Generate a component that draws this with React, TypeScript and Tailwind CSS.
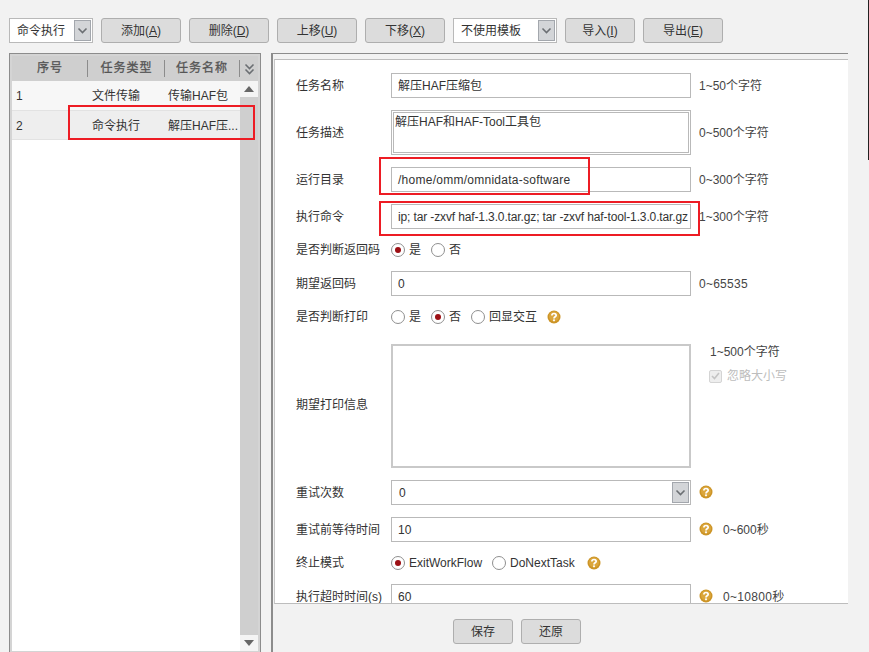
import React from "react";

const FONT = "font-['Liberation_Sans','Noto_Sans_CJK_SC',sans-serif]";

const Chevron = () => (
  <svg width="11" height="7" viewBox="0 0 11 7" fill="none">
    <path d="M1.5 1.5 L5.5 5.5 L9.5 1.5" stroke="#6b6f73" strokeWidth="1.6" />
  </svg>
);

const ArrowBtn = ({ className }: { className: string }) => (
  <span className={`flex items-center justify-center border border-[#a3a7ad] bg-[#d3d5d8] ${className}`}>
    <Chevron />
  </span>
);

const Btn = ({ label, hot, w = "w-[80px]" }: { label: string; hot?: string; w?: string }) => (
  <button className={`${w} h-[25px] rounded-[3px] border border-[#aeaeae] bg-[#dcdcdc] text-[12px] text-[#333]`}>
    {label}
    {hot && (
      <>
        (<u>{hot}</u>)
      </>
    )}
  </button>
);

const Help = () => (
  <svg width="14" height="14" viewBox="0 0 14 14" className="block shrink-0">
    <circle cx="7" cy="7" r="6.5" fill="#cc9426" />
    <circle cx="7" cy="6.5" r="5" fill="#dba63c" />
    <path d="M4.9 5.4 C4.9 2.9 9.2 2.9 9.2 5.3 C9.2 6.8 7 6.8 7 8.4" stroke="#fff" strokeWidth="1.7" fill="none" />
    <rect x="6.1" y="9.4" width="1.8" height="1.8" fill="#fff" />
  </svg>
);

const Radio = ({ on, label, gap = "w-[40px]" }: { on?: boolean; label: string; gap?: string }) => (
  <span className={`flex items-center gap-[4px] ${gap}`}>
    <span className="flex h-[14px] w-[14px] shrink-0 items-center justify-center rounded-full border border-[#8f8f8f] bg-white">
      {on && <span className="h-[6px] w-[6px] rounded-full bg-[#9c0f14]" />}
    </span>
    <span className="whitespace-nowrap">{label}</span>
  </span>
);

const Row = ({ label, children, h = "h-[25px]" }: { label: string; children: React.ReactNode; h?: string }) => (
  <div className={`flex shrink-0 items-center ${h}`}>
    <span className="w-[95px] shrink-0 whitespace-nowrap">{label}</span>
    {children}
  </div>
);

const Input = ({ value, className = "" }: { value: string; className?: string }) => (
  <div className={`flex h-[25px] w-[300px] shrink-0 items-center overflow-hidden whitespace-nowrap border border-[#b9b9b9] bg-white pl-[6px] text-[#333] ${className}`}>
    {value}
  </div>
);

const Hint = ({ children, className = "ml-[8px]" }: { children: React.ReactNode; className?: string }) => (
  <span className={`whitespace-nowrap text-[#444] ${className}`}>{children}</span>
);

const RedBox = ({ className }: { className: string }) => (
  <div className={`absolute border-2 border-[#ed1c24] ${className}`} />
);

export default function App() {
  return (
    <div className={`relative h-[652px] w-[869px] overflow-hidden bg-[#f2f2f2] pt-[18px] text-[12px] text-[#333] ${FONT}`}>
      {/* toolbar */}
      <div className="ml-[9px] flex h-[25px] items-center">
        <div className="flex h-[25px] w-[84px] items-center justify-between border border-[#b9b9b9] bg-white pl-[7px] pr-[1px]">
          <span>命令执行</span>
          <ArrowBtn className="h-[21px] w-[17px]" />
        </div>
        <div className="ml-[8px] flex gap-[8px]">
          <Btn label="添加" hot="A" />
          <Btn label="删除" hot="D" />
          <Btn label="上移" hot="U" />
          <Btn label="下移" hot="X" />
        </div>
        <div className="ml-[8px] flex h-[25px] w-[104px] items-center justify-between border border-[#b9b9b9] bg-white pl-[7px] pr-[1px]">
          <span>不使用模板</span>
          <ArrowBtn className="h-[21px] w-[17px]" />
        </div>
        <div className="ml-[8px] flex gap-[8px]">
          <Btn label="导入" hot="I" w="w-[70px]" />
          <Btn label="导出" hot="E" />
        </div>
      </div>

      <div className="ml-[9px] mt-[10px] flex h-[599px]">
        {/* task list */}
        <div className="h-[610px] w-[252px] shrink-0 border border-[#8c8c8c] bg-[#d4d4d4] p-[2px]">
          <div className="flex h-[25px] items-center bg-[#cfcfcf] tracking-[1px] text-[#555] [-webkit-text-stroke:0.3px_#555]">
            <span className="w-[76px] border-r border-[#8c8c8c] pl-[1px] text-center leading-[17px]">序号</span>
            <span className="w-[77px] border-r border-[#8c8c8c] pl-[1px] text-center leading-[17px]">任务类型</span>
            <span className="w-[75px] border-r border-[#8c8c8c] text-center leading-[17px]">任务名称</span>
            <span className="flex flex-1 flex-col items-center">
              <Chevron />
              <span className="-mt-[2px]">
                <Chevron />
              </span>
            </span>
          </div>
          <div className="flex h-[570px]">
            <div className="w-[228px] bg-white">
              <div className="flex h-[30px] items-center border-b border-[#e2e2e2] bg-[#f7f7f7] pt-[1px]">
                <span className="w-[80px] pl-[4px]">1</span>
                <span className="w-[76px]">文件传输</span>
                <span>传输HAF包</span>
              </div>
              <div className="flex h-[29px] items-center border-b border-[#e2e2e2] bg-[#eeeeee] pt-[1px]">
                <span className="w-[80px] pl-[4px]">2</span>
                <span className="w-[76px]">命令执行</span>
                <span>解压HAF压...</span>
              </div>
            </div>
            <div className="flex w-[18px] flex-col bg-[#cfcfcf]">
              <span className="flex h-[16px] items-center justify-center bg-[#f4f4f4]">
                <span className="h-0 w-0 border-x-[5px] border-b-[6px] border-x-transparent border-b-[#666]" />
              </span>
              <span className="flex-1" />
              <span className="flex h-[16px] items-center justify-center bg-[#f4f4f4]">
                <span className="h-0 w-0 border-x-[5px] border-t-[6px] border-x-transparent border-t-[#666]" />
              </span>
            </div>
          </div>
        </div>

        {/* detail panel */}
        <div className="ml-[10px] flex w-[577px] flex-col border-l-2 border-t border-[#8c8c8c]">
          <div className="ml-[1px] mt-[5px] flex h-[545px] flex-col gap-[12px] overflow-hidden border-y border-l border-y-[#bdbdbd] border-l-[#c8c8c8] bg-white pl-[21px] pt-[13px]">
            <Row label="任务名称">
              <Input value="解压HAF压缩包" />
              <Hint>1~50个字符</Hint>
            </Row>
            <Row label="任务描述" h="h-[45px]">
              <div className="h-[45px] w-[300px] shrink-0 border-[3px] border-double border-[#b9b9b9] bg-white pl-[1px] leading-[18px]">
                解压HAF和HAF-Tool工具包
              </div>
              <Hint>0~500个字符</Hint>
            </Row>
            <Row label="运行目录">
              <Input value="/home/omm/omnidata-software" className="tracking-[0.26px]" />
              <Hint>0~300个字符</Hint>
            </Row>
            <Row label="执行命令">
              <Input value="ip; tar -zxvf haf-1.3.0.tar.gz; tar -zxvf haf-tool-1.3.0.tar.gz" className="tracking-[-0.13px]" />
              <Hint>1~300个字符</Hint>
            </Row>
            <Row label="是否判断返回码" h="h-[18px]">
              <Radio on label="是" />
              <Radio label="否" />
            </Row>
            <Row label="期望返回码">
              <Input value="0" />
              <Hint className="ml-[8px] tracking-[0.25px]">0~65535</Hint>
            </Row>
            <Row label="是否判断打印" h="h-[18px]">
              <Radio label="是" />
              <Radio on label="否" />
              <Radio label="回显交互" gap="w-[76px]" />
              <Help />
            </Row>
            <div className="mt-[6px] flex h-[124px] shrink-0">
              <span className="w-[95px] shrink-0 self-center pb-[2px]">期望打印信息</span>
              <div className="h-[124px] w-[300px] shrink-0 border-2 border-[#c9c9c9] bg-white" />
              <div className="ml-[19px] flex flex-col pt-[1px]">
                <span className="leading-[14px] text-[#444]">1~500个字符</span>
                <span className="-ml-[1px] mt-[8px] flex items-center gap-[5px] text-[#bdbdbd]">
                  <span className="flex h-[13px] w-[13px] items-center justify-center rounded-[2px] border border-[#d4d4d4] bg-[#eeeeee]">
                    <svg width="9" height="8" viewBox="0 0 9 8" fill="none">
                      <path d="M1 4 L3.5 6.5 L8 1" stroke="#c4c4c4" strokeWidth="1.6" />
                    </svg>
                  </span>
                  忽略大小写
                </span>
              </div>
            </div>
            <Row label="重试次数">
              <div className="flex h-[25px] w-[300px] shrink-0 items-center justify-between border border-[#b9b9b9] bg-white pl-[7px] pr-[1px]">
                <span>0</span>
                <ArrowBtn className="h-[21px] w-[17px]" />
              </div>
              <span className="ml-[8px] -mt-[1px]">
                <Help />
              </span>
            </Row>
            <Row label="重试前等待时间">
              <Input value="10" />
              <span className="ml-[8px] -mt-[1px]">
                <Help />
              </span>
              <Hint className="ml-[10px]">0~600秒</Hint>
            </Row>
            <Row label="终止模式" h="h-[18px]">
              <Radio on label="ExitWorkFlow" gap="w-[101px]" />
              <Radio label="DoNextTask" gap="w-[95px]" />
              <Help />
            </Row>
            <Row label="执行超时时间(s)">
              <Input value="60" />
              <span className="ml-[8px] -mt-[1px]">
                <Help />
              </span>
              <Hint className="ml-[10px] tracking-[0.3px]">0~10800秒</Hint>
            </Row>
          </div>
          <div className="mt-[15px] flex gap-[8px] pl-[180px]">
            <Btn label="保存" w="w-[60px]" />
            <Btn label="还原" w="w-[60px]" />
          </div>
        </div>
      </div>

      {/* annotation boxes */}
      <RedBox className="left-[68px] top-[105px] h-[35px] w-[187px]" />
      <RedBox className="left-[379px] top-[157px] h-[38px] w-[211px]" />
      <RedBox className="left-[379px] top-[201px] h-[35px] w-[321px]" />
      {/* window edge */}
      <div className="absolute right-0 top-0 h-[160px] w-px bg-[#222]" />
    </div>
  );
}
